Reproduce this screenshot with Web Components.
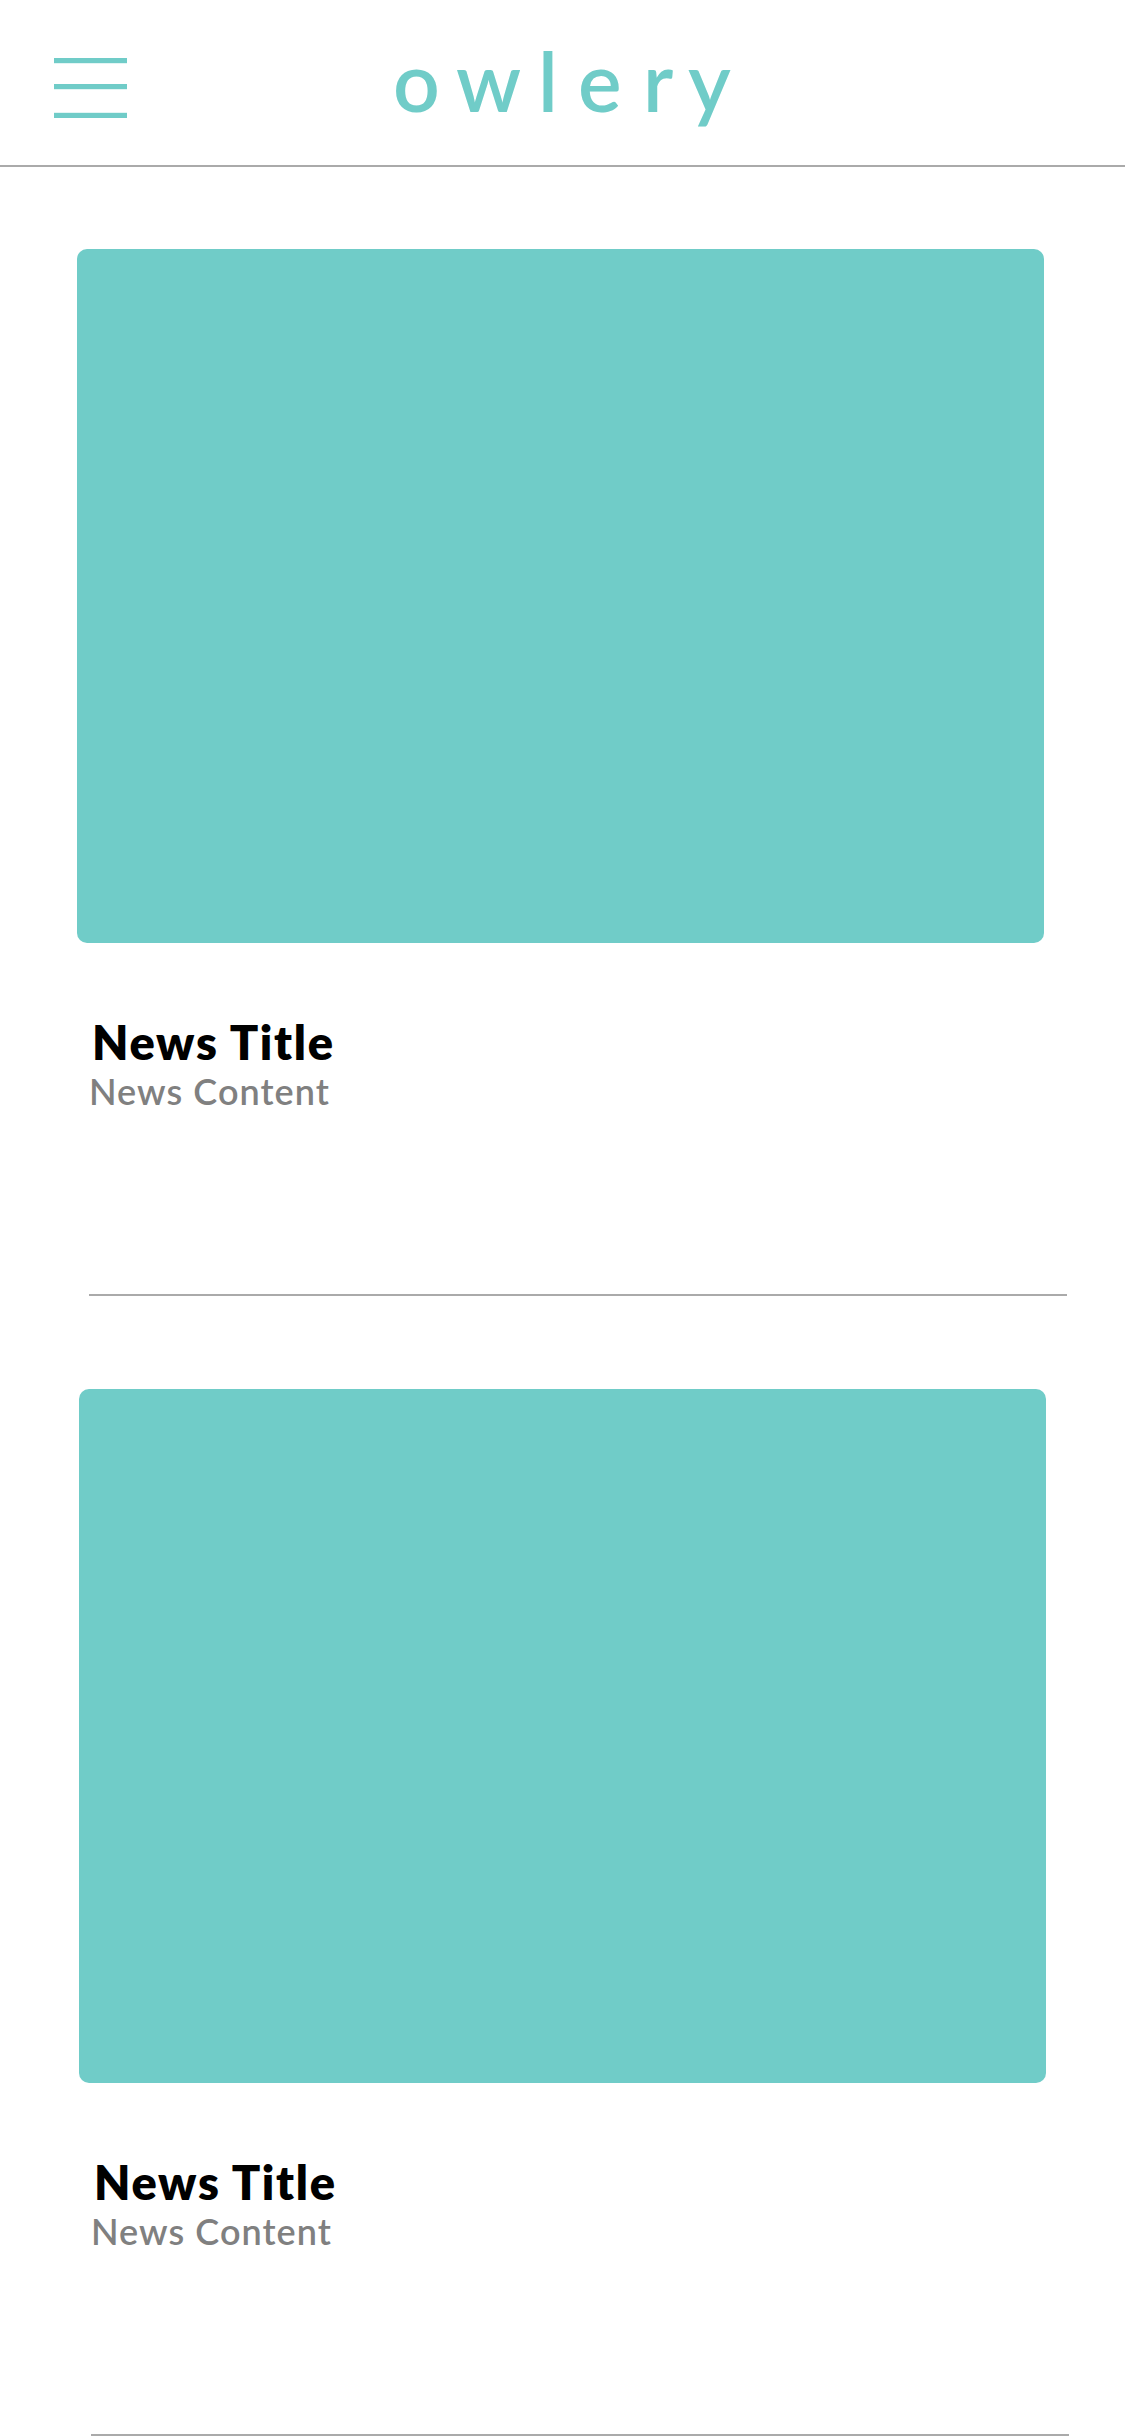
<!DOCTYPE html>
<html lang="en">
<head>
<meta charset="utf-8">
<title>owlery</title>
<style>
  html, body { margin: 0; background: #fff; }
  body { height: 2436px; overflow: hidden; font-family: Lato, "Open Sans", sans-serif; }
</style>
</head>
<body>
<owlery-app></owlery-app>
<script>
const define = (name, html) => customElements.define(name, class extends HTMLElement {
  constructor() {
    super();
    const t = document.createElement('template');
    t.innerHTML = html;
    this.attachShadow({ mode: 'open' }).append(t.content.cloneNode(true));
  }
});

define('menu-button', `
  <style>:host{display:block;width:73px;height:60px} svg{display:block}</style>
  <svg width="73" height="60" viewBox="0 0 73 60" fill="#70ccc8" role="img" aria-label="Menu">
    <rect width="73" height="5.2"/><rect y="26" width="73" height="5.2"/><rect y="54.8" width="73" height="5.2"/>
  </svg>`);

define('brand-logo', `
  <style>:host{display:block} svg{display:block;overflow:visible}
  text{font-family:Lato,sans-serif;font-weight:600;font-size:82px;fill:#70ccc8}</style>
  <svg width="340" height="100"><text y="71.5" x="2 65 147 187 252 297">owlery</text></svg>`);

define('app-header', `
  <style>
    :host{display:flex;box-sizing:border-box;height:167px;border-bottom:2px solid #aaa;padding:58px 0 0 54px}
    brand-logo{margin:-18px 0 0 264px}
  </style>
  <menu-button></menu-button><brand-logo></brand-logo>`);

define('news-card', `
  <style>
    :host{display:block;width:990px;height:1047px}
    .picture{width:967px;height:694px;border-radius:10px;background:#70ccc8}
    .copy{padding:71px 0 0 15px;height:203px;box-sizing:border-box}
    h2{margin:0;font-size:47px;line-height:56px;font-weight:800;color:#000;letter-spacing:1.7px;white-space:nowrap}
    p{margin:-1px 0 0 -3px;font-size:36px;line-height:44px;font-weight:600;color:#808080;letter-spacing:1.05px;white-space:nowrap}
    .rule{width:978px;height:2px;margin:148px 0 0 12px;background:#aaa}
  </style>
  <div class="picture"></div>
  <div class="copy"><h2><slot name="title"></slot></h2><p><slot name="content"></slot></p></div>
  <div class="rule"></div>`);

define('owlery-app', `
  <style>
    :host{display:block;width:1125px}
    main{display:flex;flex-direction:column;gap:93px;padding:82px 0 0 77px}
    news-card + news-card{margin-left:2px}
  </style>
  <app-header></app-header>
  <main>
    <news-card><span slot="title">News Title</span><span slot="content">News Content</span></news-card>
    <news-card><span slot="title">News Title</span><span slot="content">News Content</span></news-card>
  </main>`);
</script>
</body>
</html>
